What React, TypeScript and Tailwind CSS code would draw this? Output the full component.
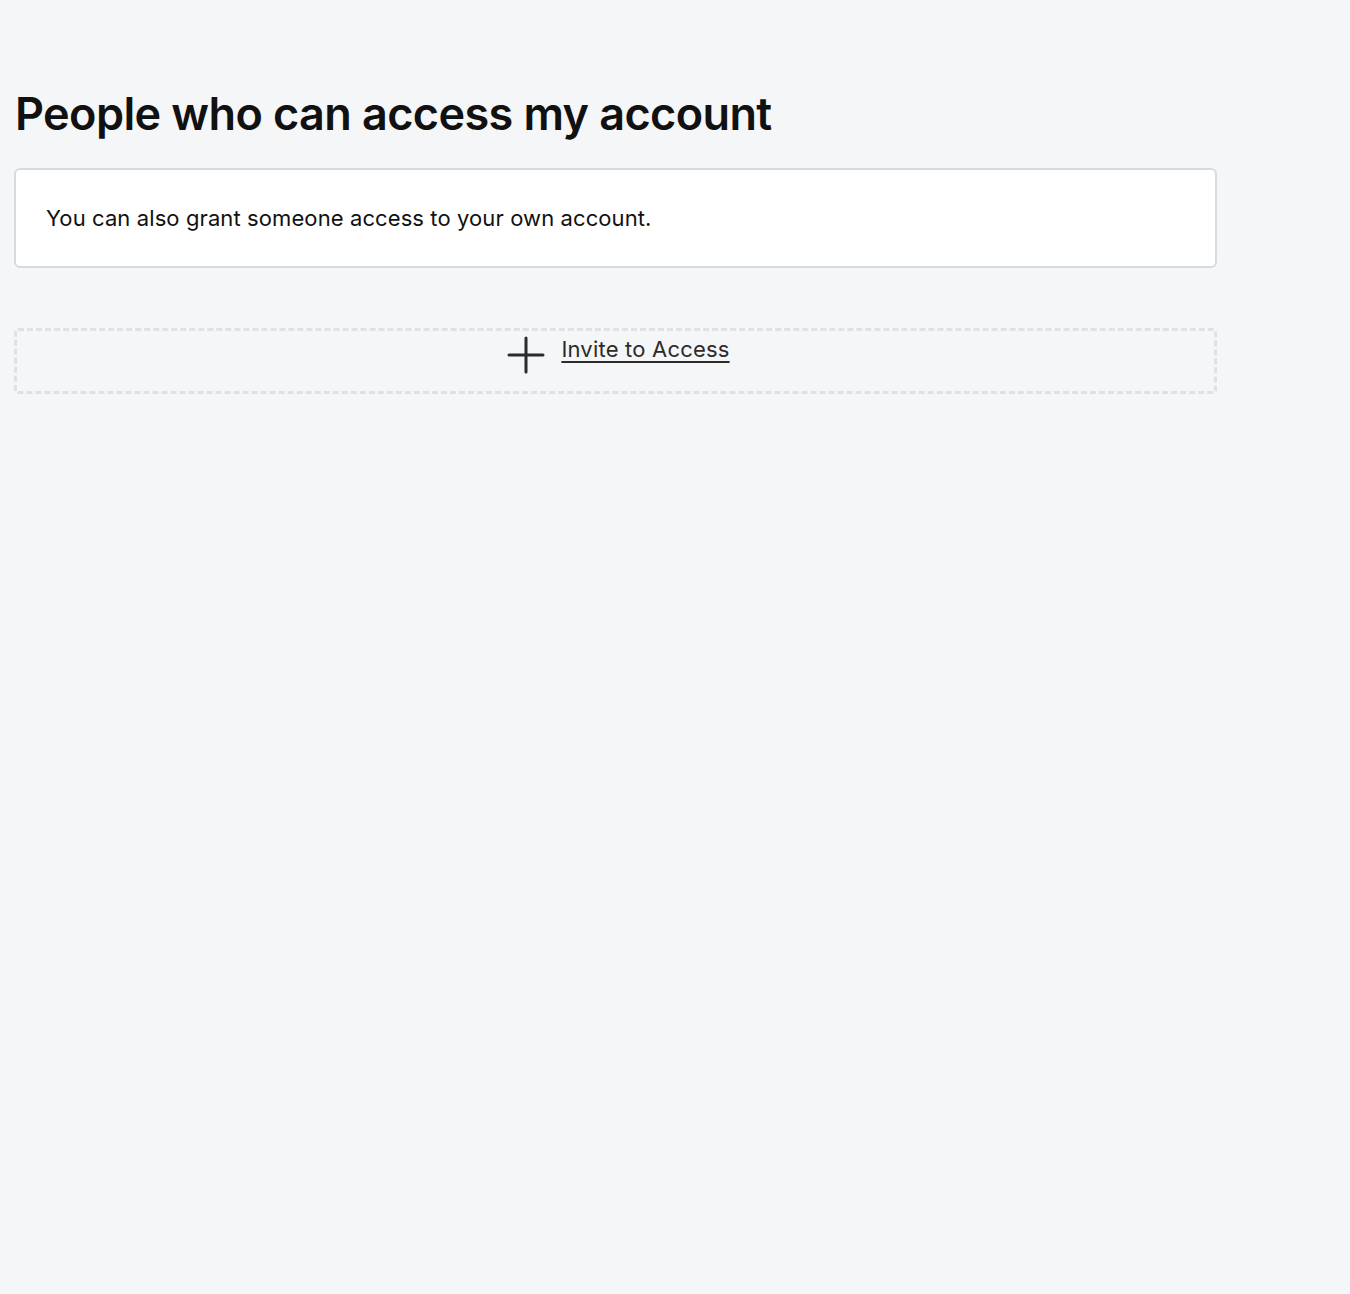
import React from "react";

const App: React.FC = () => {
  return (
    <div
      className="min-h-[1294px] w-full bg-[#f5f6f8] text-[#111111]"
      style={{ fontFamily: "Inter, 'Noto Sans', sans-serif" }}
    >
      <div className="w-[1217px] pl-[14px] pt-[84px]">
        {/* title */}
        <h1 className="text-[45px] font-semibold leading-[60px] tracking-[-0.6px] pl-px">
          People who can access my account
        </h1>

        {/* info card */}
        <div className="mt-[24px] h-[100px] rounded-[6px] border-2 border-[#d6dbe0] bg-white px-[30px] flex items-center">
          <p className="text-[22px] leading-[28px] text-[#111111] tracking-[0.1px]">
            You can also grant someone access to your own account.
          </p>
        </div>

        {/* invite */}
        <div className="mt-[60px] h-[66px] rounded-[4px] border-[3px] border-dashed border-[#e0e1e3] flex justify-center items-start pl-[6px]">
          <a href="#" className="flex items-start gap-[16px] text-[#2b2b2b]">
            <svg width="38" height="38" viewBox="0 0 38 38" className="mt-[5px]">
              <path d="M19 2v34M2 19h34" stroke="#2b2b2b" strokeWidth="3" strokeLinecap="round" />
            </svg>
            <span className="mt-[3px] text-[22px] leading-[30px] tracking-[0.2px] underline underline-offset-[4px] decoration-[2px]">
              Invite to Access
            </span>
          </a>
        </div>
      </div>
    </div>
  );
};

export default App;
